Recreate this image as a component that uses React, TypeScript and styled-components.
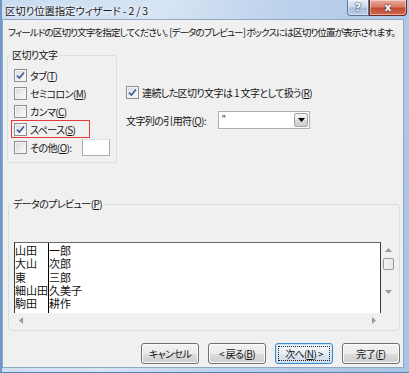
import styled, { createGlobalStyle } from "styled-components"

const GlobalStyle = createGlobalStyle`
  html, body {
    margin: 0;
    padding: 0;
    background: #ffffff;
  }
  body {
    font-family: "Noto Sans CJK JP", "Noto Sans", sans-serif;
    font-size: 10px;
    letter-spacing: -0.6px;
    color: #151515;
    font-feature-settings: "palt";
  }
`

const Window = styled.div`
  width: 409px;
  height: 373px;
  box-sizing: border-box;
  display: flex;
  flex-direction: column;
  overflow: hidden;
  background: linear-gradient(100deg, #c9dbf1 0%, #d6e4f4 35%, #bcd1eb 60%, #a9c3e4 100%);
  border-left: 2px solid #6f97c9;
  border-bottom: 1px solid #5a82b6;
`

const TitleBar = styled.div`
  height: 19px;
  display: flex;
  align-items: flex-start;
  flex: none;
`

const Title = styled.div`
  flex: 1;
  padding: 3px 0 0 3px;
  line-height: 16px;
  font-size: 10.5px;
  letter-spacing: -0.2px;
  color: #1b1b1b;
  text-shadow: 0 0 6px #ffffff, 0 0 3px #ffffff;
  white-space: nowrap;
`

const Caption = styled.div`
  display: flex;
  margin-right: 2px;
`

const CaptionButton = styled.div<{ $close?: boolean }>`
  width: ${(p) => (p.$close ? "38px" : "22px")};
  height: 16px;
  box-sizing: border-box;
  display: flex;
  align-items: center;
  justify-content: center;
  border: 1px solid ${(p) => (p.$close ? "#6e2a22" : "#5f7391")};
  border-top: none;
  border-radius: ${(p) => (p.$close ? "0 0 4px 0" : "0 0 0 4px")};
  background: ${(p) =>
    p.$close
      ? "linear-gradient(180deg, #e9a99b 0%, #d97a66 45%, #c34a33 55%, #d26a4f 100%)"
      : "linear-gradient(180deg, #e3ebf5 0%, #c9d7ea 45%, #a9bfdc 55%, #b9cde6 100%)"};
  box-shadow: inset 0 0 0 1px rgba(255, 255, 255, 0.45);
  color: #ffffff;
  font-family: "DejaVu Sans", sans-serif;
  font-weight: bold;
  font-size: 11px;
  letter-spacing: 0;
  text-shadow: 0 0 2px #2a3140, 0 0 1px #2a3140;
`

const Client = styled.div`
  flex: 1;
  margin: 0 5px 4px 0;
  border: 1px solid #8ea8c8;
  background: #f0f0f0;
  display: flex;
  flex-direction: column;
`

const Intro = styled.div`
  padding: 5px 0 0 5px;
  height: 14px;
  line-height: 14px;
  white-space: nowrap;
  font-size: 9.6px;
  letter-spacing: -0.95px;
`

const UpperRow = styled.div`
  display: flex;
  margin-top: 9px;
`

const Group = styled.fieldset<{ $w: number; $h: number; $left: number; $top?: number }>`
  margin: ${(p) => p.$top ?? 0}px 0 0 ${(p) => p.$left}px;
  padding: 0;
  min-width: 0;
  width: ${(p) => p.$w}px;
  height: ${(p) => p.$h}px;
  box-sizing: border-box;
  border: 1px solid #d5dfe5;
  border-radius: 3px;
`

const Legend = styled.legend`
  margin-left: 2px;
  padding: 0 2px;
  line-height: 14px;
  font-size: 10px;
`

const Checks = styled.div`
  padding-top: 4px;
  display: flex;
  flex-direction: column;
`

const CheckRow = styled.div<{ $mark?: boolean }>`
  display: flex;
  align-items: center;
  gap: 3px;
  height: 18px;
  margin-left: 3px;
  padding-left: 3px;
  box-sizing: border-box;
  white-space: nowrap;
  width: ${(p) => (p.$mark ? "79px" : "auto")};
  outline: ${(p) => (p.$mark ? "1.5px solid #e5393b" : "none")};
  outline-offset: -1px;
`

const Box = styled.span`
  width: 13px;
  height: 13px;
  flex: none;
  box-sizing: border-box;
  border: 1px solid #8e8f8f;
  background: linear-gradient(135deg, #d4d7dc 0%, #eceef0 55%, #fbfbfb 100%);
  box-shadow: inset 0 0 0 1px #f4f4f4;
  display: flex;
  align-items: center;
  justify-content: center;
`

const SmallInput = styled.span`
  width: 28px;
  height: 17px;
  margin-left: 8px;
  box-sizing: border-box;
  border: 1px solid #abadb3;
  border-top-color: #e3e3e3;
  background: #ffffff;
`

const U = styled.span`
  text-decoration: underline;
  text-underline-offset: 1px;
`

const RightCol = styled.div`
  margin-left: 9px;
  padding-top: 35px;
  display: flex;
  flex-direction: column;
`

const PlainRow = styled.div`
  display: flex;
  align-items: center;
  gap: 3px;
  height: 18px;
  white-space: nowrap;
`

const ComboRow = styled.div`
  display: flex;
  align-items: center;
  height: 18px;
  margin-top: 10px;
`

const ComboLabel = styled.span`
  width: 92px;
  white-space: nowrap;
`

const Combo = styled.div`
  width: 92px;
  height: 18px;
  box-sizing: border-box;
  border: 1px solid #abadb3;
  background: #ffffff;
  display: flex;
  align-items: stretch;
`

const ComboValue = styled.span`
  flex: 1;
  padding-left: 3px;
  line-height: 16px;
  font-family: "Liberation Sans", sans-serif;
  font-size: 10px;
`

const ComboArrow = styled.span`
  width: 14px;
  margin: 1px;
  box-sizing: border-box;
  border: 1px solid #a3a3a3;
  border-radius: 2px;
  background: linear-gradient(180deg, #f4f4f4 0%, #e8e8e8 50%, #d8d8d8 51%, #cfcfcf 100%);
  display: flex;
  align-items: center;
  justify-content: center;
`

const PreviewGrid = styled.div`
  margin: 31px 0 0 5px;
  display: grid;
  grid-template-columns: 367px 15px;
  grid-template-rows: 71px 15px;
`

const ListBox = styled.div`
  background: #ffffff;
  border: 1px solid #3a3a3a;
  border-bottom: none;
  border-top-color: #6a6a6a;
  display: flex;
  overflow: hidden;
`

const DataCol = styled.div<{ $w?: number }>`
  width: ${(p) => (p.$w ? `${p.$w}px` : "auto")};
  flex: ${(p) => (p.$w ? "none" : "1")};
  box-sizing: border-box;
  border-right: ${(p) => (p.$w ? "1px solid #000" : "none")};
  padding-top: 1px;
  font-size: 11px;
  letter-spacing: 0;
  line-height: 13.25px;
  font-feature-settings: normal;
  white-space: nowrap;
  overflow: hidden;
  color: #111;
`

const VScroll = styled.div`
  display: flex;
  flex-direction: column;
  align-items: center;
  padding-top: 6px;
`

const Thumb = styled.div`
  width: 11px;
  height: 12px;
  margin-top: 6px;
  box-sizing: border-box;
  border: 1px solid #9a9a9a;
  border-radius: 2px;
  background: linear-gradient(90deg, #f6f6f6 0%, #e6e6e6 100%);
`

const Spacer = styled.div`
  flex: 1;
`

const HScroll = styled.div`
  display: flex;
  align-items: center;
  padding: 0 5px 0 5px;
`

const ButtonRow = styled.div`
  display: flex;
  justify-content: flex-end;
  gap: 9px;
  margin-top: 12px;
  padding-right: 3px;
`

const Button = styled.div<{ $focus?: boolean }>`
  width: 58px;
  height: 21px;
  box-sizing: border-box;
  border: 1px solid ${(p) => (p.$focus ? "#3c8ad0" : "#707070")};
  border-radius: 3px;
  background: ${(p) =>
    p.$focus
      ? "linear-gradient(180deg, #f3f8fc 0%, #e8f0f7 50%, #dbe6f0 51%, #d0dde9 100%)"
      : "linear-gradient(180deg, #f2f2f2 0%, #ebebeb 50%, #dddddd 51%, #cfcfcf 100%)"};
  box-shadow: inset 0 0 0 1px ${(p) => (p.$focus ? "#bfe3f8" : "#fbfbfb")};
  display: flex;
  align-items: center;
  justify-content: center;
  padding: 2px;
  white-space: nowrap;
`

const FocusRing = styled.span`
  flex: 1;
  align-self: stretch;
  display: flex;
  align-items: center;
  justify-content: center;
  border: 1px dotted #222;
`

const Check = () => (
  <svg width="9" height="9" viewBox="0 0 9 9">
    <path d="M1 4.6 L3.4 7 L8 1.4" fill="none" stroke="#3f5b93" strokeWidth="1.6" />
  </svg>
)

const Arrow = ({ dir }: { dir: "up" | "down" | "left" | "right" }) => {
  const pts = {
    up: "0,4 3.5,0 7,4",
    down: "0,0 3.5,4 7,0",
    left: "4,0 0,3.5 4,7",
    right: "0,0 4,3.5 0,7",
  }[dir]
  const vertical = dir === "up" || dir === "down"
  return (
    <svg width={vertical ? 7 : 4} height={vertical ? 4 : 7} viewBox={vertical ? "0 0 7 4" : "0 0 4 7"}>
      <polygon points={pts} fill="#9a9a9a" />
    </svg>
  )
}

const CheckBox = ({ checked }: { checked?: boolean }) => <Box>{checked && <Check />}</Box>

const names = [
  ["山田", "一郎"],
  ["大山", "次郎"],
  ["東", "三郎"],
  ["細山田", "久美子"],
  ["駒田", "耕作"],
]

export default function App() {
  return (
    <>
      <GlobalStyle />
      <Window>
        <TitleBar>
          <Title>区切り位置指定ウィザード - 2 / 3</Title>
          <Caption>
            <CaptionButton>?</CaptionButton>
            <CaptionButton $close>x</CaptionButton>
          </Caption>
        </TitleBar>

        <Client>
          <Intro>
            フィールドの区切り文字を指定してください。 [データのプレビュー] ボックスには区切り位置が表示されます。
          </Intro>

          <UpperRow>
            <Group $w={110} $h={115} $left={4}>
              <Legend>区切り文字</Legend>
              <Checks>
                <CheckRow>
                  <CheckBox checked />
                  <span>
                    タブ(<U>T</U>)
                  </span>
                </CheckRow>
                <CheckRow>
                  <CheckBox />
                  <span>
                    セミコロン(<U>M</U>)
                  </span>
                </CheckRow>
                <CheckRow>
                  <CheckBox />
                  <span>
                    カンマ(<U>C</U>)
                  </span>
                </CheckRow>
                <CheckRow $mark>
                  <CheckBox checked />
                  <span>
                    スペース(<U>S</U>)
                  </span>
                </CheckRow>
                <CheckRow>
                  <CheckBox />
                  <span>
                    その他(<U>O</U>):
                  </span>
                  <SmallInput />
                </CheckRow>
              </Checks>
            </Group>

            <RightCol>
              <PlainRow>
                <CheckBox checked />
                <span>
                  連続した区切り文字は 1 文字として扱う(<U>R</U>)
                </span>
              </PlainRow>
              <ComboRow>
                <ComboLabel>
                  文字列の引用符(<U>Q</U>):
                </ComboLabel>
                <Combo>
                  <ComboValue>"</ComboValue>
                  <ComboArrow>
                    <svg width="7" height="4" viewBox="0 0 7 4">
                      <polygon points="0,0 7,0 3.5,4" fill="#000" />
                    </svg>
                  </ComboArrow>
                </Combo>
              </ComboRow>
            </RightCol>
          </UpperRow>

          <Group $w={392} $h={134} $left={5} $top={34}>
            <Legend>
              データのプレビュー(<U>P</U>)
            </Legend>
            <PreviewGrid>
              <ListBox>
                <DataCol $w={34}>
                  {names.map(([a]) => (
                    <div key={a}>{a}</div>
                  ))}
                </DataCol>
                <DataCol>
                  {names.map(([a, b]) => (
                    <div key={a}>{b}</div>
                  ))}
                </DataCol>
              </ListBox>
              <VScroll>
                <Arrow dir="up" />
                <Thumb />
                <Spacer />
                <Arrow dir="down" />
                <Spacer />
              </VScroll>
              <HScroll>
                <Arrow dir="left" />
                <Spacer />
                <Arrow dir="right" />
              </HScroll>
            </PreviewGrid>
          </Group>

          <ButtonRow>
            <Button>キャンセル</Button>
            <Button>
              &lt; 戻る(<U>B</U>)
            </Button>
            <Button $focus>
              <FocusRing>
                次へ(<U>N</U>) &gt;
              </FocusRing>
            </Button>
            <Button>
              完了(<U>F</U>)
            </Button>
          </ButtonRow>
        </Client>
      </Window>
    </>
  )
}
